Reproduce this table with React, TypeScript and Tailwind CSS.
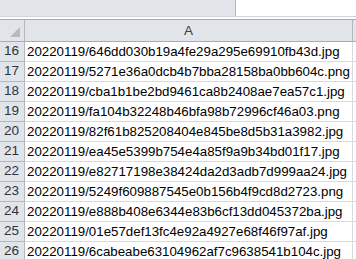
import React from "react";

const rows: [number, string][] = [
  [16, "20220119/646dd030b19a4fe29a295e69910fb43d.jpg"],
  [17, "20220119/5271e36a0dcb4b7bba28158ba0bb604c.png"],
  [18, "20220119/cba1b1be2bd9461ca8b2408ae7ea57c1.jpg"],
  [19, "20220119/fa104b32248b46bfa98b72996cf46a03.png"],
  [20, "20220119/82f61b825208404e845be8d5b31a3982.jpg"],
  [21, "20220119/ea45e5399b754e4a85f9a9b34bd01f17.jpg"],
  [22, "20220119/e82717198e38424da2d3adb7d999aa24.jpg"],
  [23, "20220119/5249f609887545e0b156b4f9cd8d2723.png"],
  [24, "20220119/e888b408e6344e83b6cf13dd045372ba.jpg"],
  [25, "20220119/01e57def13fc4e92a4927e68f46f97af.jpg"],
  [26, "20220119/6cabeabe63104962af7c9638541b104c.jpg"],
];

export default function App() {
  return (
    <div className="w-[356px] h-[259px] overflow-hidden bg-white font-['Liberation_Sans',Arial,sans-serif]">
      {/* formula bar strip */}
      <div className="flex h-[17px] border-b border-[#d0d3d7]">
        <div className="w-[236px] bg-[#e1e4e8] border-r border-[#b4b7bb]" />
        <div className="flex-1 bg-white" />
      </div>
      <div className="h-[2px]" />

      {/* column headers */}
      <div className="flex h-[23px] border-t border-b border-[#a9acb1] bg-[#e1e4e8]">
        <div className="w-[25px] shrink-0 border-r border-[#b4b7bb] flex items-end justify-end pr-[4px] pb-[4px]">
          <svg width="10" height="10" viewBox="0 0 10 10">
            <polygon points="10,0 10,10 0,10" fill="#b6babf" />
          </svg>
        </div>
        <div className="w-[328px] shrink-0 border-r border-[#b4b7bb] flex items-center justify-center text-[13.5px] text-[#3a3d42] pt-px">
          A
        </div>
        <div className="flex-1" />
      </div>

      {/* rows */}
      {rows.map(([n, v]) => (
        <div key={n} className="flex h-[20px]">
          <div className="w-[25px] shrink-0 bg-[#e1e4e8] border-r border-b border-[#b4b7bb] flex items-center justify-end pr-[5px] text-[13.5px] text-[#2c3440]">
            {n}
          </div>
          <div className="w-[328px] shrink-0 border-r border-b border-[#d9dadc] flex items-center pl-[2px] text-[13.3px] text-black whitespace-nowrap overflow-hidden">
            {v}
          </div>
          <div className="flex-1 border-b border-[#d9dadc]" />
        </div>
      ))}
    </div>
  );
}
